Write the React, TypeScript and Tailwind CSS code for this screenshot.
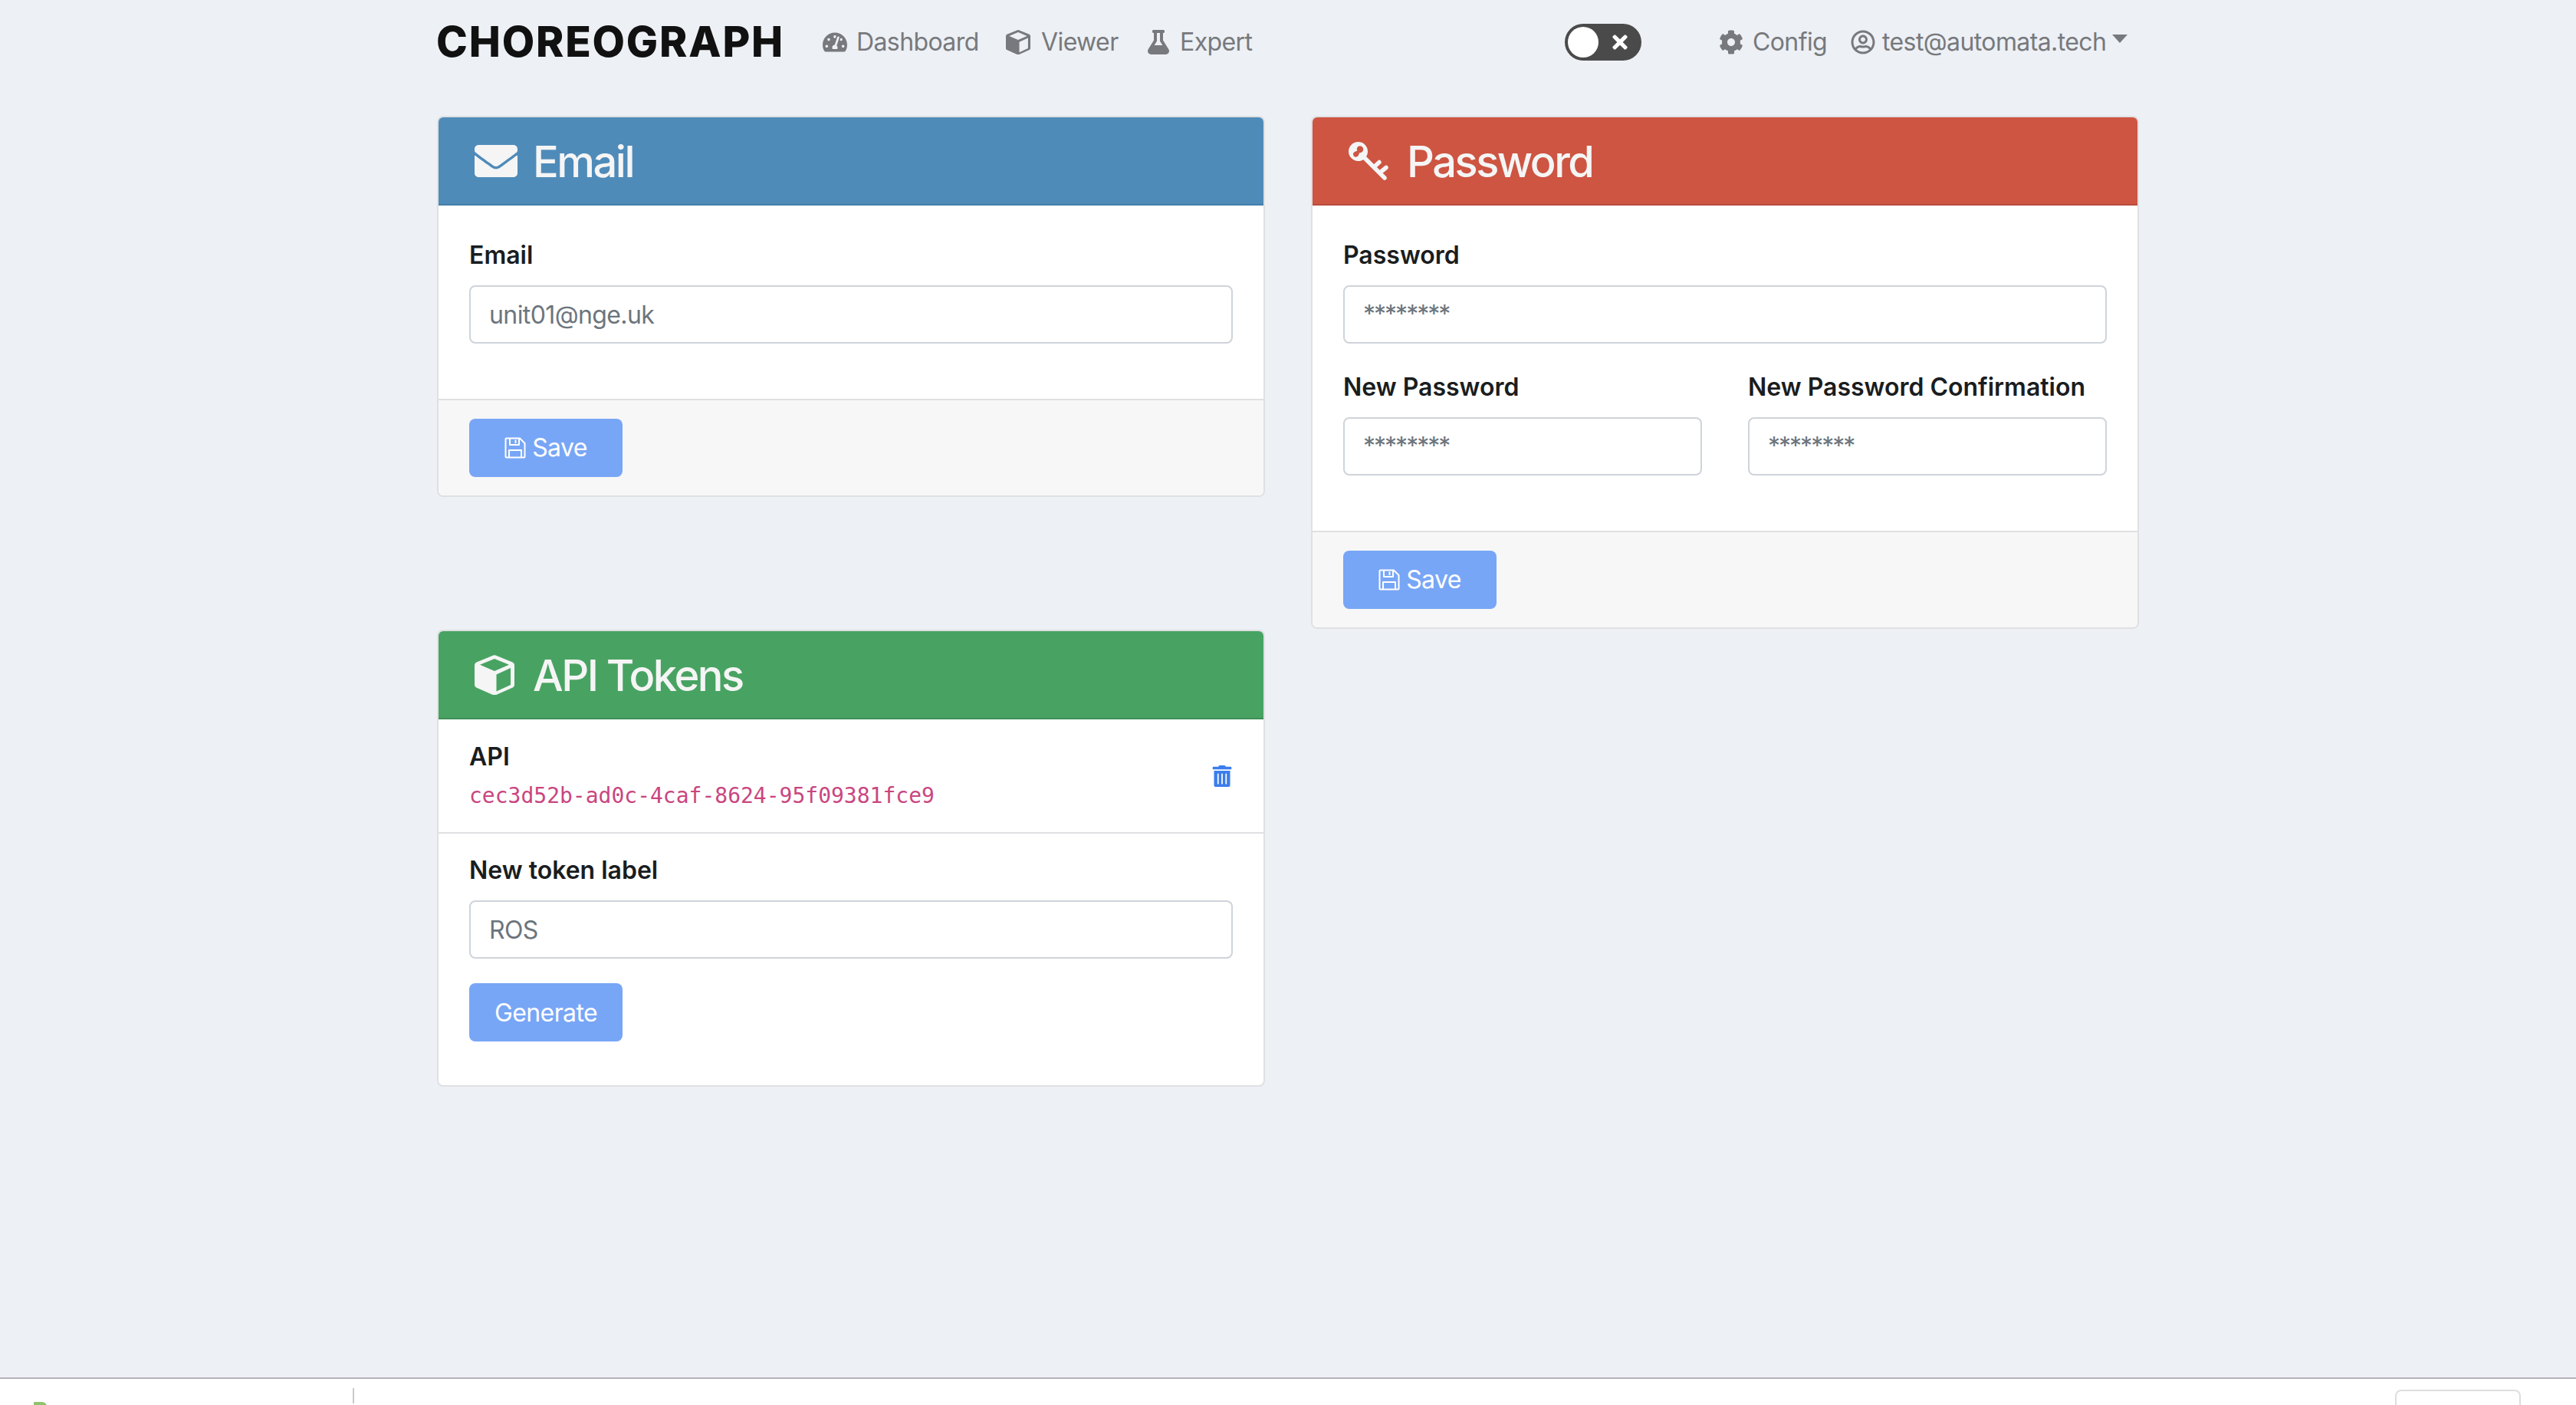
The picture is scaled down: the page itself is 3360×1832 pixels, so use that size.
import { FaCog, FaEnvelope, FaFlask, FaRegUserCircle, FaTachometerAlt, FaTimes, FaTrashAlt } from 'react-icons/fa'
import type { ReactNode } from 'react'

function KeyIcon() {
  return (
    <svg viewBox="0 0 52 50" className="mr-1 h-[50px] w-[52px] shrink-0" fill="none" stroke="currentColor" strokeLinecap="round" strokeWidth="5.5">
      <path
        fill="currentColor"
        stroke="none"
        fillRule="evenodd"
        d="M12.5 0a12.500 12.500 0 1 1 0 25a12.500 12.500 0 1 1 0-25zM15 5.200a4.200 4.200 0 0 0-3.600 6.300l-3 1.200a3.600 3.600 0 1 0 4.600 4.600l1.200-3a4.200 4.200 0 1 0 .8-9.100z"
      />
      <path d="M20 20l27 27M33 33l7-6.500M41 40l8-6.500" />
    </svg>
  )
}

function CubeIcon({ className }: { className: string }) {
  return (
    <svg viewBox="0 0 52 52" className={`shrink-0 ${className}`} fill="currentColor">
      <path
        fillRule="evenodd"
        d="M24.500.500a4 4 0 0 1 3 0l22 9a4 4 0 0 1 2.500 3.700v25.600a4 4 0 0 1-2.200 3.600l-22 9.800a4 4 0 0 1-3.600 0l-22-9.800A4 4 0 0 1 0 38.800V13.200a4 4 0 0 1 2.500-3.700zM26 5L7 12.800L26 21l19-8.200zM28.500 25.500v22l18.500-8.500V17z"
      />
    </svg>
  )
}

function SaveIcon() {
  return (
    <svg viewBox="0 0 28 28" className="size-7 shrink-0" fill="none" stroke="currentColor" strokeWidth="2" strokeLinejoin="round">
      <path d="M2.500 1.500H20L26.500 8V25.500a1 1 0 0 1-1 1H2.500a1 1 0 0 1-1-1V2.500a1 1 0 0 1 1-1z" />
      <path d="M7 1.500V10H19V1.500M14.500 3.500V8M6 26.500V17H22V26.500" />
    </svg>
  )
}

function NavLink({ icon, label, className }: { icon: ReactNode; label: string; className?: string }) {
  return (
    <a className={`flex items-center gap-3 text-[#77797c] ${className ?? ''}`}>
      {icon}
      <span>{label}</span>
    </a>
  )
}

function Card({ title, icon, color, edge, children, className }: { title: string; icon: ReactNode; color: string; edge: string; children: ReactNode; className?: string }) {
  return (
    <section className={`overflow-hidden rounded-lg border-2 border-[#dfe0e2] bg-white ${className ?? ''}`}>
      <header className={`flex h-[115px] items-center gap-5 border-b-2 pl-[47px] text-[56px] font-medium text-[#f5f5f5] ${color} ${edge}`}>
        {icon}
        <h3 className="pt-[2px] tracking-[-2.5px]">{title}</h3>
      </header>
      {children}
    </section>
  )
}

function Field({ label, value, stars }: { label: string; value: string; stars?: boolean }) {
  return (
    <div className="min-w-0 flex-1">
      <label className="mb-[14px] block h-[50px] pt-[1px] leading-[48px] font-semibold tracking-normal text-[#1a1d20]">{label}</label>
      <div className={`flex h-[76px] items-center rounded-lg border-2 border-[#ced4da] bg-white px-6 text-[#6c757d] ${stars ? 'tracking-[-2px]' : 'pt-[1px]'}`}>
        {value}
      </div>
    </div>
  )
}

function SaveFooter() {
  return (
    <footer className="border-t-2 border-[#dfe0e2] bg-[#f7f7f7] px-10 pt-6 pb-6">
      <button className="flex h-[76px] w-[200px] items-center justify-center gap-[8px] rounded-lg bg-[#78a6f6] text-[#ffffff]">
        <SaveIcon />
        Save
      </button>
    </footer>
  )
}

export default function App() {
  return (
    <div className="flex h-[1832px] flex-col overflow-hidden bg-[#edf0f5] font-['Inter',sans-serif] text-[32px] tracking-[-0.6px]">
      <nav className="flex h-[109px] shrink-0 items-center pl-[569px]">
        <span className="w-[504px] text-[55px] leading-none font-extrabold tracking-[1.8px] text-[#111]">CHOREOGRAPH</span>
        <NavLink icon={<FaTachometerAlt className="size-8" />} label="Dashboard" className="w-[239px]" />
        <NavLink icon={<CubeIcon className="mr-[2px] size-8" />} label="Viewer" className="w-[183px]" />
        <NavLink icon={<FaFlask className="size-8" />} label="Expert" className="w-[546px]" />
        <div className="flex h-12 w-[100px] items-center justify-between rounded-full bg-[#4a4a4a] pr-[14px] pl-[4px]">
          <span className="size-10 rounded-full bg-white" />
          <FaTimes className="size-7 text-white" />
        </div>
        <NavLink icon={<FaCog className="size-8" />} label="Config" className="ml-[101px] w-[172px]" />
        <a className="flex items-center gap-[9px] text-[#77797c]">
          <FaRegUserCircle className="size-8" />
          <span>test@automata.tech</span>
        </a>
        <span className="mb-2 ml-2 border-x-[10px] border-t-[11px] border-x-transparent border-t-[#77797c]" />
      </nav>

      <main className="grid w-[2220px] flex-1 grid-cols-[1080px_1080px] content-start gap-x-[60px] pt-[42px] pl-[570px]">
        <div className="flex h-[670px] items-start">
          <Card title="Email" icon={<FaEnvelope className="size-14" />} color="bg-[#4f8bb9]" edge="border-[#467fa9]" className="w-full">
            <div className="px-10 pt-[40px] pb-[72px]">
              <Field label="Email" value="unit01@nge.uk" />
            </div>
            <SaveFooter />
          </Card>
        </div>
        <Card title="Password" icon={<KeyIcon />} color="bg-[#cd5542]" edge="border-[#b94c3b]" className="self-start">
          <div className="px-10 pt-[40px] pb-[72px]">
            <Field label="Password" value="********" stars />
            <div className="mt-[32px] flex gap-[60px]">
              <Field label="New Password" value="********" stars />
              <Field label="New Password Confirmation" value="********" stars />
            </div>
          </div>
          <SaveFooter />
        </Card>
        <Card title="API Tokens" icon={<CubeIcon className="mr-1 h-[52px] w-[52px]" />} color="bg-[#48a362]" edge="border-[#3f8f56]" className="self-start">
          <div className="flex h-[149px] items-center justify-between border-b-2 border-[#dfe0e2] px-10">
            <div className="pt-[2px]">
              <div className="leading-[48px] font-semibold tracking-normal text-[#1a1d20]">API</div>
              <code className="mt-[3px] block font-['DejaVu_Sans_Mono',monospace] text-[28px] leading-[48px] tracking-normal text-[#c9467f]">cec3d52b-ad0c-4caf-8624-95f09381fce9</code>
            </div>
            <FaTrashAlt className="size-7 text-[#3b7ded]" />
          </div>
          <div className="px-10 pt-[23px] pb-[57px]">
            <Field label="New token label" value="ROS" />
            <button className="mt-8 h-[76px] w-[200px] rounded-lg bg-[#78a6f6] pt-[1px] text-white">Generate</button>
          </div>
        </Card>
      </main>

      <footer className="flex h-[36px] shrink-0 items-start border-t-2 border-[#b5b3b8] bg-white">
        <div className="mt-[30px] ml-[44px] h-2 w-[17px] rounded-tr-md bg-[#8fc46f]" />
        <div className="mt-[12px] ml-[399px] h-5 w-[2px] bg-[#c9c9c9]" />
        <div className="mt-[14px] ml-[2662px] h-10 w-[164px] rounded-t-lg border-2 border-[#dedede]" />
      </footer>
    </div>
  )
}
